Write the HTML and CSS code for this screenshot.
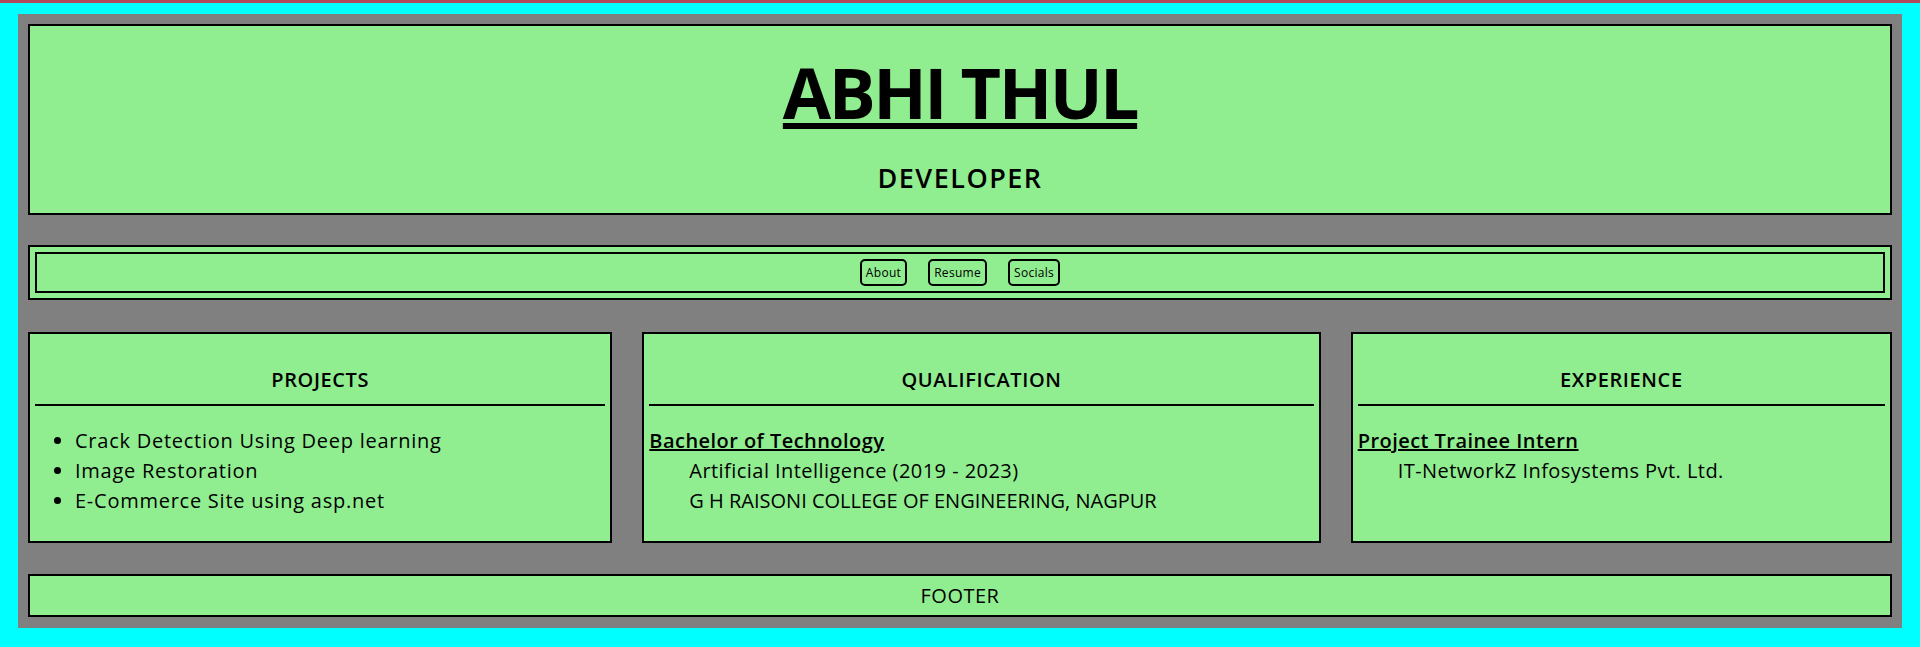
FILE: index.html
```html
<!DOCTYPE html>
<html lang="en">
<head>
<meta charset="utf-8">
<title>Abhi Thul</title>
<link rel="stylesheet" href="styles.css">
</head>
<body>
<div class="topbar"></div>
<div class="page">
  <header class="hero">
    <h1 class="name">ABHI THUL</h1>
    <h2 class="role">DEVELOPER</h2>
  </header>
  <nav class="nav">
    <div class="nav-inner">
      <a class="btn" href="#about">About</a>
      <a class="btn" href="#resume">Resume</a>
      <a class="btn" href="#socials">Socials</a>
    </div>
  </nav>
  <main class="cards">
    <section class="card">
      <h3 class="card-title">PROJECTS</h3>
      <ul class="list">
        <li>Crack Detection Using Deep learning</li>
        <li>Image Restoration</li>
        <li>E-Commerce Site using asp.net</li>
      </ul>
    </section>
    <section class="card">
      <h3 class="card-title">QUALIFICATION</h3>
      <dl class="dl">
        <dt>Bachelor of Technology</dt>
        <dd>Artificial Intelligence (2019 - 2023)</dd>
        <dd class="caps">G H RAISONI COLLEGE OF ENGINEERING, NAGPUR</dd>
      </dl>
    </section>
    <section class="card">
      <h3 class="card-title">EXPERIENCE</h3>
      <dl class="dl">
        <dt>Project Trainee Intern</dt>
        <dd>IT-NetworkZ Infosystems Pvt. Ltd.</dd>
      </dl>
    </section>
  </main>
  <footer class="footer">FOOTER</footer>
</div>
</body>
</html>
```
FILE: styles.css
```css
html, body {
  margin: 0;
  padding: 0;
}
body {
  background: #00ffff;
  font-family: "Open Sans", "Noto Sans", sans-serif;
  color: #000;
  min-height: 647px;
}
.topbar {
  height: 3px;
  background: #b0495a;
}
.page {
  margin: 11px 18px 0;
  background: #808080;
  padding: 10px 10px 11px;
  display: flex;
  flex-direction: column;
}
.hero {
  background: #90ee90;
  border: 2px solid #000;
  height: 187px;
  text-align: center;
}
.name {
  margin: 31px 0 0;
  font-size: 70px;
  line-height: 70px;
  font-weight: 700;
  letter-spacing: -2.5px;
  text-decoration: underline;
  text-decoration-thickness: 6px;
  text-underline-offset: 4px;
}
.role {
  margin: 33px 0 0;
  font-size: 27px;
  line-height: 36px;
  font-weight: 600;
  letter-spacing: 1.5px;
}
.nav {
  margin-top: 30px;
  background: #90ee90;
  border: 2px solid #000;
  padding: 5px;
}
.nav-inner {
  border: 2px solid #000;
  padding: 5px 0;
  display: flex;
  justify-content: center;
  gap: 21px;
}
.btn {
  display: flex;
  align-items: center;
  height: 23px;
  padding: 0 4px;
  border: 2px solid #000;
  border-radius: 5px;
  font-size: 12px;
  letter-spacing: 0.3px;
  color: #000;
  text-decoration: none;
}
.cards {
  margin-top: 32px;
  display: grid;
  grid-template-columns: 584fr 678fr 541fr;
  gap: 30px;
  height: 211px;
}
.card {
  background: #90ee90;
  border: 2px solid #000;
  padding: 5px;
}
.card-title {
  margin: 26px 0 0;
  padding-bottom: 9px;
  border-bottom: 2px solid #000;
  text-align: center;
  font-size: 20px;
  line-height: 30px;
  font-weight: 600;
  letter-spacing: 0.6px;
}
.list {
  margin: 20px 0 0;
  padding-left: 40px;
  font-size: 20px;
  line-height: 30px;
  letter-spacing: 0.75px;
}
.dl {
  margin: 20px 0 0;
  font-size: 20px;
  line-height: 30px;
  letter-spacing: 0.45px;
}
.dl dt {
  font-weight: 600;
  text-decoration: underline;
  letter-spacing: 0.45px;
}
.dl dd {
  margin-left: 40px;
}
.dl .caps {
  letter-spacing: 0;
}
.footer {
  margin-top: 31px;
  background: #90ee90;
  border: 2px solid #000;
  padding: 4px 0;
  text-align: center;
  font-size: 20px;
  line-height: 31px;
  letter-spacing: 0.5px;
}
```
